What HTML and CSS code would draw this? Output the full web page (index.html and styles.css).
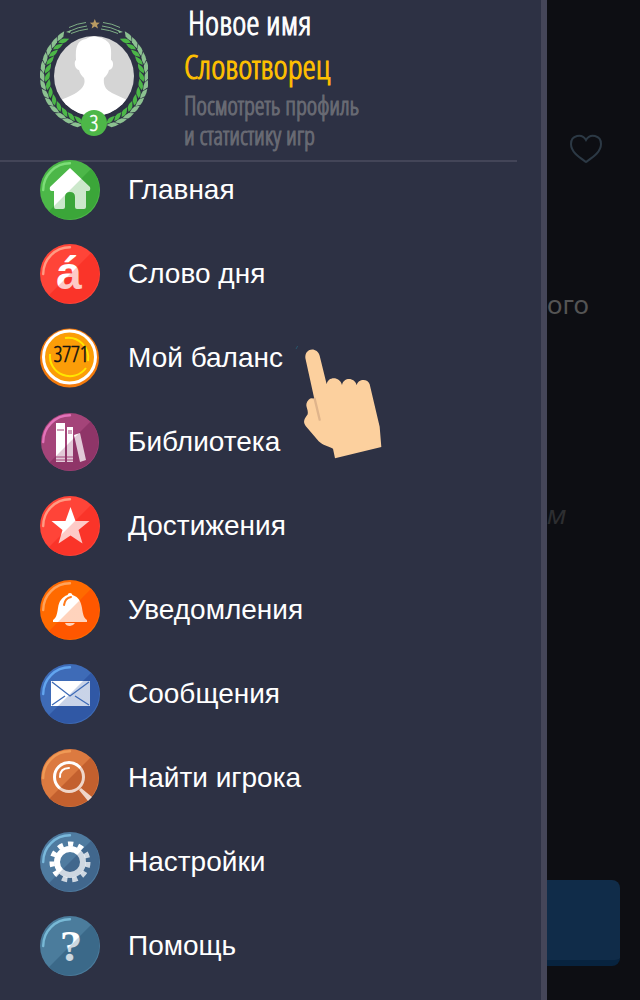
FILE: index.html
```html
<!DOCTYPE html>
<html lang="ru">
<head>
    <meta charset="UTF-8">
    <meta name="viewport" content="width=device-width, initial-scale=1.0">
    <title>Словотворец</title>
    <link rel="stylesheet" href="styles.css">
</head>
<body>
    <!-- shared gradient and shapes -->
    <svg class="defs" width="0" height="0" aria-hidden="true">
        <defs>
            <linearGradient id="shine" gradientUnits="userSpaceOnUse" x1="20" y1="20" x2="40" y2="40">
                <stop offset="0.48" stop-color="#fff"/>
                <stop offset="0.52" stop-color="#fff" stop-opacity="0.74"/>
            </linearGradient>
            <path id="half" d="M51.2 8.8A30 30 0 0 1 8.8 51.2Z"/>
            <path id="arc" d="M3.2 30A26.8 26.8 0 0 1 30 3.2" fill="none" stroke-width="2.400" stroke-linecap="round"/>
            <g id="leaf">
                <path d="M-50 6L-53.800 2Q-54.500-1-53.500-6L-50-2Q-49 2-50 6Z" fill="#8cc191"/>
                <path d="M-48.500 6Q-50 2-48-1L-44.500-5Q-43.500 0-45 2.500Z" fill="#4cb748"/>
            </g>
            <g id="branch">
                <use href="#leaf" transform="rotate(-70)"/>
                <use href="#leaf" transform="rotate(-60)"/>
                <use href="#leaf" transform="rotate(-50)"/>
                <use href="#leaf" transform="rotate(-40)"/>
                <use href="#leaf" transform="rotate(-30)"/>
                <use href="#leaf" transform="rotate(-20)"/>
                <use href="#leaf" transform="rotate(-10)"/>
                <use href="#leaf"/>
                <use href="#leaf" transform="rotate(10)"/>
                <use href="#leaf" transform="rotate(20)"/>
                <use href="#leaf" transform="rotate(30)"/>
                <use href="#leaf" transform="rotate(40)"/>
                <use href="#leaf" transform="rotate(50)"/>
                <path d="M-25-48.500Q-17-52.500-8-53.500M-24-45Q-16-49-7-50M-23-42.500Q-15-46-6-47" fill="none" stroke="#7fae86" stroke-width="1"/>
                <path d="M-28-44L-23-46L-24-43Z" fill="#8cc191"/>
            </g>
        </defs>
    </svg>

    <aside class="drawer">
        <a class="profile" href="#">
            <svg class="avatar" viewBox="40 16 108 128" aria-hidden="true">
                <clipPath id="face"><circle cx="94" cy="76" r="40"/></clipPath>
                <circle cx="94" cy="76" r="40" fill="#d5d5d5"/>
                <path clip-path="url(#face)" fill="#fff" d="M76 60C75 46 78 40 86 39C92 34 103 37 108 42C112 46 111 53 111 60C114 61 114 69 109 70C108 74 106 76 104 78C103 86 106 90 112 93L127 100V120H61V100C68 97 76 94 81 89C85 85 85 81 84 78C82 76 80 74 79 70C74 69 74 61 76 60Z"/>
                <use href="#branch" transform="translate(94 76)"/>
                <use href="#branch" transform="translate(95 76) scale(-1 1)"/>
                <path fill="#b99b62" d="M94.800 19L96.200 22.400L99.800 22.700L97 25L98 28.600L94.800 26.600L91.600 28.600L92.600 25L89.800 22.700L93.400 22.400Z"/>
                <circle cx="94" cy="123" r="13" fill="#4db748"/>
                <text class="narrow" x="94" y="131" font-size="22" text-anchor="middle" fill="#fff" stroke="#fff" stroke-width="0.500">3</text>
            </svg>
            <div class="profile-text narrow">
                <div class="name">Новое имя</div>
                <div class="rank">Словотворец</div>
                <div class="hint">Посмотреть профиль<br>и статистику игр</div>
            </div>
        </a>

        <nav>
            <ul class="menu">
                <li><a href="#">
                    <svg class="icon" viewBox="0 0 60 60" aria-hidden="true">
                        <circle cx="30" cy="30" r="30" fill="#4cb748"/>
                        <use href="#half" fill="#3ba639"/>
                        <use href="#arc" stroke="#7ddd78"/>
                        <path fill="url(#shine)" d="M30 8L50 27Q51 31 48 31H46V47Q46 49 44 49H37Q35 49 35 47V37Q35 32 30 32Q25 32 25 37V47Q25 49 23 49H16Q14 49 14 47V31H12Q9 31 10 27Z"/>
                    </svg>
                    <span>Главная</span>
                </a></li>
                <li><a href="#">
                    <svg class="icon" viewBox="0 0 60 60" aria-hidden="true">
                        <circle cx="30" cy="30" r="30" fill="#ff4438"/>
                        <use href="#half" fill="#fa3429"/>
                        <use href="#arc" stroke="#ff9b83"/>
                        <text x="29" y="45" font-size="46" font-weight="bold" text-anchor="middle" fill="url(#shine)">á</text>
                    </svg>
                    <span>Слово дня</span>
                </a></li>
                <li class="balance"><a href="#">
                    <svg class="icon" viewBox="0 0 60 60" aria-hidden="true">
                        <circle cx="29.500" cy="30" r="29.500" fill="#f47b0c"/>
                        <circle cx="29.500" cy="29" r="26" fill="#fb9d08" stroke="#fff" stroke-width="3"/>
                        <path d="M10 26A20 20 0 0 0 46 40M25 10A20 20 0 0 1 48 33" fill="none" stroke="#ffe600" stroke-width="2"/>
                        <text class="narrow" x="31" y="34" font-size="22" text-anchor="middle" fill="#111" stroke="#111" stroke-width="0.500">3771</text>
                    </svg>
                    <span>Мой баланс</span>
                </a>
                    <svg class="hand" viewBox="0 0 360 420" aria-hidden="true">
                        <path fill="#fcd09e" d="M76 84C74 52 112 50 119 77L140 163C143 138 180 138 186 165C191 141 224 141 230 166C234 145 264 145 269 163L299 290L304 351L165 385L159 356C145 348 128 346 116 334L77 288C68 275 73 267 83 253C87 236 70 226 86 209Q94 202 103 207Z"/>
                        <path d="M104 206L119 269" fill="none" stroke="#dfb48b" stroke-width="7" stroke-linecap="round"/>
                        <path d="M48 57L53 48" stroke="#28556c" stroke-width="3"/>
                    </svg>
                </li>
                <li><a href="#">
                    <svg class="icon" viewBox="0 0 60 60" aria-hidden="true">
                        <circle cx="30" cy="30" r="29" fill="#a44479"/>
                        <path d="M50.500 9.500A29 29 0 0 1 9.500 50.500Z" fill="#8f3568"/>
                        <use href="#arc" stroke="#e272b9"/>
                        <path fill="url(#shine)" d="M16 11H25V50H16ZM27 15H33V50H27ZM34 23L40 21L46 48L40 50Z"/>
                        <path d="M17 18H24M16 45H25M16 48H25M28 19H32M28 21H32M27 45H33M27 48H33" stroke="#a44479" stroke-width="1"/>
                    </svg>
                    <span>Библиотека</span>
                </a></li>
                <li><a href="#">
                    <svg class="icon" viewBox="0 0 60 60" aria-hidden="true">
                        <circle cx="30" cy="30" r="30" fill="#ff4438"/>
                        <use href="#half" fill="#fa3429"/>
                        <use href="#arc" stroke="#ff9b83"/>
                        <path fill="url(#shine)" d="M30.500 11L35.500 25H49.500L38.500 34L42.500 47.500L30.500 39.500L18.500 47.500L22.500 34L11.500 25H25.500Z"/>
                    </svg>
                    <span>Достижения</span>
                </a></li>
                <li><a href="#">
                    <svg class="icon" viewBox="0 0 60 60" aria-hidden="true">
                        <circle cx="30" cy="30" r="30" fill="#ff6a00"/>
                        <use href="#half" fill="#ff5700"/>
                        <use href="#arc" stroke="#ffa35c"/>
                        <path fill="url(#shine)" d="M30 13Q32 13 32.500 15C39 17 41 22 42 28C43 35 44 38 47 40V42H13V40C16 38 17 35 18 28C19 21 22 17 27.500 15Q28 13 30 13ZM25 43H35Q33 46 30 46Q26 46 25 43Z"/>
                        <path d="M24 25Q25 18 31 17" fill="none" stroke="#ff7a1c" stroke-width="2" stroke-linecap="round"/>
                    </svg>
                    <span>Уведомления</span>
                </a></li>
                <li><a href="#">
                    <svg class="icon" viewBox="0 0 60 60" aria-hidden="true">
                        <circle cx="30" cy="30" r="30" fill="#3e6bb7"/>
                        <use href="#half" fill="#3058a5"/>
                        <use href="#arc" stroke="#62a5ef"/>
                        <path fill="url(#shine)" d="M11 17H50V42H11Z"/>
                        <path d="M12 18L30 32L49 18M12 41L25 32M49 41L35 32" fill="none" stroke="#3e6bb7" stroke-width="1.300"/>
                    </svg>
                    <span>Сообщения</span>
                </a></li>
                <li><a href="#">
                    <svg class="icon" viewBox="0 0 60 60" aria-hidden="true">
                        <circle cx="30" cy="30" r="29" fill="#dc7a40"/>
                        <path d="M50.500 9.500A29 29 0 0 1 9.500 50.500Z" fill="#c3602e"/>
                        <use href="#arc" stroke="#f09a55"/>
                        <circle cx="29" cy="29" r="14.500" fill="none" stroke="url(#shine)" stroke-width="3"/>
                        <path d="M20 29Q20 20 29 20" fill="none" stroke="#fff" stroke-width="2" stroke-linecap="round"/>
                        <path fill="url(#shine)" d="M39 42L41 40L52 49L48 53Z"/>
                    </svg>
                    <span>Найти игрока</span>
                </a></li>
                <li><a href="#">
                    <svg class="icon" viewBox="0 0 60 60" aria-hidden="true">
                        <circle cx="30" cy="30" r="30" fill="#4f7ba0"/>
                        <use href="#half" fill="#41678d"/>
                        <use href="#arc" stroke="#7ab9dc"/>
                        <circle cx="30" cy="30" r="13" fill="none" stroke="url(#shine)" stroke-width="6"/>
                        <circle cx="30" cy="30" r="18" fill="none" stroke="url(#shine)" stroke-width="5" stroke-dasharray="5.300 4.982"/>
                    </svg>
                    <span>Настройки</span>
                </a></li>
                <li><a href="#">
                    <svg class="icon" viewBox="0 0 60 60" aria-hidden="true">
                        <circle cx="30" cy="30" r="30" fill="#4b7c9c"/>
                        <use href="#half" fill="#3b6989"/>
                        <use href="#arc" stroke="#78b9d6"/>
                        <text class="serif" x="31" y="45" font-size="45" font-weight="bold" text-anchor="middle" fill="url(#shine)">?</text>
                    </svg>
                    <span>Помощь</span>
                </a></li>
            </ul>
        </nav>
    </aside>

    <main class="page">
        <button class="like" type="button" aria-label="Нравится">
            <svg viewBox="0 0 34 30" aria-hidden="true">
                <path d="M17 28C10 23 2 18 2 10C2 1 13-1 17 6C21-1 32 1 32 10C32 18 24 23 17 28Z" fill="none" stroke="#2c3945" stroke-width="2"/>
            </svg>
        </button>
        <p class="word">ого</p>
        <p class="example">м</p>
        <button class="next" type="button" aria-label="Далее"></button>
    </main>
</body>
</html>
```

FILE: styles.css
```css
* {
    box-sizing: border-box;
}
body {
    margin: 0;
    min-height: 100vh;
    display: grid;
    grid-template-columns: 1fr 93px;
    background-color: #0d0e13;
    color: #fff;
    font-family: "Liberation Sans", Arial, sans-serif;
}
.defs {
    position: absolute;
}
.narrow {
    font-family: "Open Sans Condensed Light", "Open Sans Condensed", sans-serif;
    font-weight: 300;
    -webkit-text-stroke-width: 1px;
}
.serif {
    font-family: "Liberation Serif", serif;
}
.drawer {
    background-color: #2d3144;
    border-right: 6px solid #454659;
}
.profile {
    display: flex;
    align-items: flex-start;
    gap: 36px;
    margin-right: 24px;
    padding: 0 0 10px 40px;
    border-bottom: 2px solid #434558;
    text-decoration: none;
}
.avatar {
    width: 108px;
    height: 128px;
    margin-top: 16px;
    flex: none;
}
.name {
    padding-left: 4px;
    font-size: 34px;
    line-height: 44px;
    color: #fff;
}
.rank {
    font-size: 34px;
    line-height: 44px;
    color: #ffc000;
}
.hint {
    margin-top: 2px;
    font-size: 25px;
    line-height: 30px;
    color: #686a73;
}
.menu {
    position: relative;
    display: flex;
    flex-direction: column;
    gap: 24px;
    margin: -2px 0 0;
    padding: 0 0 24px 40px;
    list-style: none;
}
.menu a {
    display: flex;
    align-items: center;
    gap: 28px;
    color: #fff;
    font-size: 28px;
    text-decoration: none;
}
.icon {
    width: 60px;
    height: 60px;
    flex: none;
}
.balance {
    position: relative;
}
.hand {
    position: absolute;
    left: 240px;
    top: 2px;
    width: 120px;
    height: 140px;
    pointer-events: none;
}
.page {
    display: flex;
    flex-direction: column;
    font-family: "Noto Sans", sans-serif;
}
.page button {
    padding: 0;
    border: 0;
    background: none;
}
.page .like {
    width: 34px;
    height: 30px;
    margin: 134px 0 0 22px;
}
.like svg {
    display: block;
}
.word {
    margin: 120px 0 0;
    font-size: 26px;
    line-height: 40px;
    color: #545454;
}
.example {
    margin: 170px 0 0;
    font-size: 26px;
    line-height: 40px;
    font-style: italic;
    color: #2d2e31;
}
.page .next {
    height: 86px;
    margin: auto 20px 34px 0;
    border-bottom: 6px solid #07233f;
    border-radius: 0 8px 8px 0;
    background-color: #102c49;
}
```
